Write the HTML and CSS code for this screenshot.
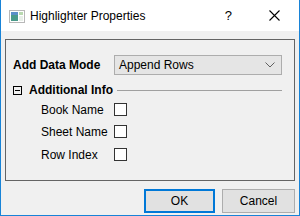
FILE: index.html
```html
<!DOCTYPE html>
<html lang="en">
<head>
<meta charset="UTF-8">
<title>Highlighter Properties</title>
<link rel="stylesheet" href="styles.css">
</head>
<body>
<div class="window">
  <div class="titlebar">
    <svg class="app-icon" width="16" height="13" viewBox="0 0 16 13">
      <rect x="0.5" y="0.5" width="15" height="12" fill="#fff" stroke="#b8b8b8"/>
      <rect x="2" y="2" width="7" height="9" fill="#4a9a8a"/>
      <rect x="2" y="2" width="7" height="3" fill="#5b8fc8"/>
      <rect x="10" y="2" width="4" height="3" fill="#b9d9b0"/>
      <rect x="10" y="6" width="4" height="5" fill="#e8efe8"/>
    </svg>
    <span class="title">Highlighter Properties</span>
    <span class="help">?</span>
    <svg class="close" width="11" height="11" viewBox="0 0 11 11">
      <path d="M0.5 0.5 L10.5 10.5 M10.5 0.5 L0.5 10.5" stroke="#000" stroke-width="1.1"/>
    </svg>
  </div>
  <div class="content">
    <div class="group">
      <div class="row">
        <span class="label bold">Add Data Mode</span>
        <div class="combo">
          <span>Append Rows</span>
          <svg width="10" height="6" viewBox="0 0 10 6">
            <path d="M0.5 0.5 L5 5 L9.5 0.5" fill="none" stroke="#606060" stroke-width="1"/>
          </svg>
        </div>
      </div>
      <div class="section">
        <span class="toggle"></span>
        <span class="bold">Additional Info</span>
        <span class="rule"></span>
      </div>
      <div class="check-row first">
        <span class="check-label">Book Name</span>
        <span class="checkbox"></span>
      </div>
      <div class="check-row">
        <span class="check-label">Sheet Name</span>
        <span class="checkbox"></span>
      </div>
      <div class="check-row last">
        <span class="check-label">Row Index</span>
        <span class="checkbox"></span>
      </div>
    </div>
    <div class="buttons">
      <div class="btn default">OK</div>
      <div class="btn">Cancel</div>
    </div>
  </div>
</div>
</body>
</html>
```

FILE: styles.css
```css
body {
  margin: 0;
  padding: 0;
  font-family: 'Liberation Sans', Arial, sans-serif;
  font-size: 12px;
  color: #000;
}

.window {
  width: 300px;
  height: 216px;
  box-sizing: border-box;
  border: 1px solid #1883d7;
  border-top: none;
  display: flex;
  flex-direction: column;
}

.titlebar {
  height: 31px;
  background: #fff;
  display: flex;
  align-items: center;
  padding-left: 8px;
}

.app-icon {
  margin-top: 1px;
}

.title {
  margin-left: 5px;
  font-size: 12px;
  flex: 1;
}

.help {
  font-size: 13px;
  margin-right: 37px;
}

.close {
  margin-right: 19px;
}

.content {
  flex: 1;
  background: #f0f0f0;
  padding: 8px 4px 0 4px;
}

.group {
  height: 142px;
  box-sizing: border-box;
  border: 1px solid #646464;
  padding: 15px 12px 0 7px;
}

.row {
  display: flex;
  align-items: center;
  height: 20px;
}

.label {
  width: 101px;
}

.bold {
  font-weight: bold;
}

.combo {
  flex: 1;
  height: 20px;
  box-sizing: border-box;
  background: #e5e5e5;
  border: 1px solid #adadad;
  display: flex;
  align-items: center;
  justify-content: space-between;
  padding: 0 6px 0 4px;
}

.section {
  display: flex;
  align-items: center;
  margin-top: 9px;
  height: 12px;
}

.toggle {
  width: 9px;
  height: 9px;
  box-sizing: border-box;
  border: 1px solid #000;
  position: relative;
  margin-right: 7px;
}

.toggle::after {
  content: '';
  position: absolute;
  left: 1px;
  right: 1px;
  top: 3px;
  height: 1px;
  background: #000;
}

.rule {
  flex: 1;
  height: 1px;
  background: #a0a0a0;
  margin-left: 4px;
}

.check-row {
  display: flex;
  align-items: center;
  height: 13px;
  margin-top: 9px;
  padding-left: 28px;
}

.check-row.first {
  margin-top: 7px;
}

.check-row.last {
  margin-top: 10px;
}

.check-label {
  width: 73px;
}

.checkbox {
  width: 13px;
  height: 13px;
  box-sizing: border-box;
  border: 1px solid #333;
  background: #fff;
}

.buttons {
  display: flex;
  justify-content: flex-end;
  gap: 7px;
  margin-top: 8px;
}

.btn {
  width: 73px;
  height: 24px;
  box-sizing: border-box;
  border: 1px solid #adadad;
  background: #e1e1e1;
  display: flex;
  align-items: center;
  justify-content: center;
}

.btn.default {
  width: 71px;
  border: 2px solid #0078d7;
}
```
